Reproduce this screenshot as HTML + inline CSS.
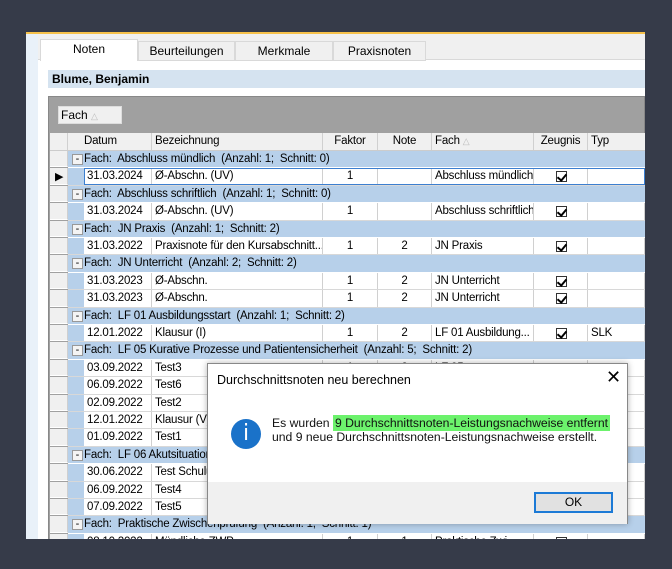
<!DOCTYPE html>
<html><head><meta charset="utf-8"><style>
*{margin:0;padding:0;box-sizing:border-box}
body{width:672px;height:569px;background:#363b49;position:relative;overflow:hidden;font-family:"Liberation Sans",Arial,sans-serif;font-size:12px;color:#000}
.a{position:absolute}
#win{left:26px;top:32px;width:619px;height:507px;background:#fff;border-top:2px solid #f6c14a;overflow:hidden}
.tab{position:absolute;top:7px;height:20px;background:#f0f0f0;border:1px solid #d9d9d9;text-align:center;line-height:18px}
.cell{position:absolute;top:0;height:100%;border-right:1px solid #d0d0d0;white-space:nowrap;overflow:hidden;padding-left:3px;line-height:17px;font-size:11.5px;letter-spacing:-0.2px}
.row{position:absolute;left:22px;width:600px;height:17.4px;font-size:11.5px}
.g{background:#b7d0ea;border-bottom:1px solid #fff}
.d{background:#fff;border-bottom:1px solid #d8d8d8}
.ind{position:absolute;left:-18px;width:18px;top:0;height:100%;background:#f0f0f0;border-right:1px solid #cfcfcf;border-bottom:1px solid #fff}
.chk{position:absolute;left:22px;top:3px;width:11px;height:11px;border:1px solid #333;background:#fff}
.chk:after{content:"";position:absolute;left:2px;top:0px;width:4px;height:7px;border:solid #000;border-width:0 2px 2px 0;transform:rotate(40deg)}
.minus{position:absolute;left:4px;top:3px;width:11px;height:11px;border:1px solid #999;background:#f4f4f4;font-size:11px;line-height:8px;text-align:center}
</style></head><body>
<div id="win" class="a">
 <div class="a" style="left:0;top:0;width:12px;height:507px;background:#e9f1f9"></div>
 <div class="a" style="left:12px;top:0;width:607px;height:26px;background:#f0f0f0;border-bottom:1px solid #d9d9d9"></div>
 <div class="tab" style="left:14px;top:5px;width:98px;height:22px;background:#fff;border-bottom:none">Noten</div>
 <div class="tab" style="left:112px;width:97px">Beurteilungen</div>
 <div class="tab" style="left:209px;width:98px">Merkmale</div>
 <div class="tab" style="left:307px;width:93px">Praxisnoten</div>
 <div class="a" style="left:22px;top:36px;width:597px;height:18px;background:#d5e3f0;font-weight:bold;padding-left:4px;line-height:18px">Blume, Benjamin</div>
 <div class="a" style="left:22px;top:62px;width:597px;height:450px;background:#a0a0a0;border:1px solid #888"></div>
 <div class="a" style="left:32px;top:72px;width:64px;height:18px;background:#f0f0f0;border:1px solid #ddd;padding-left:2px;line-height:16px">Fach <span style="color:#bbb;font-size:9px">&#9651;</span></div>
 <div class="a" style="left:24px;top:99px;width:595px;height:18px;background:#f0f0f0;border-bottom:1px solid #ccc">
  <div class="cell" style="left:0;width:18px"></div>
  <div class="cell" style="left:18px;width:84px;padding-left:16px">Datum</div>
  <div class="cell" style="left:102px;width:171px">Bezeichnung</div>
  <div class="cell" style="left:273px;width:55px;text-align:center;padding:0">Faktor</div>
  <div class="cell" style="left:328px;width:54px;text-align:center;padding:0">Note</div>
  <div class="cell" style="left:382px;width:102px">Fach <span style="color:#bbb;font-size:9px">&#9651;</span></div>
  <div class="cell" style="left:484px;width:54px;text-align:center;padding:0">Zeugnis</div>
  <div class="cell" style="left:538px;width:60px">Typ</div>
 </div>
 <div id="rows"></div>
</div>
<script>
var R=[
['g','Abschluss mündlich  (Anzahl: 1;  Schnitt: 0)'],
['d','31.03.2024','Ø-Abschn. (UV)','1','','Abschluss mündlich',''],
['g','Abschluss schriftlich  (Anzahl: 1;  Schnitt: 0)'],
['d','31.03.2024','Ø-Abschn. (UV)','1','','Abschluss schriftlich',''],
['g','JN Praxis  (Anzahl: 1;  Schnitt: 2)'],
['d','31.03.2022','Praxisnote für den Kursabschnitt...','1','2','JN Praxis',''],
['g','JN Unterricht  (Anzahl: 2;  Schnitt: 2)'],
['d','31.03.2023','Ø-Abschn.','1','2','JN Unterricht',''],
['d','31.03.2023','Ø-Abschn.','1','2','JN Unterricht',''],
['g','LF 01 Ausbildungsstart  (Anzahl: 1;  Schnitt: 2)'],
['d','12.01.2022','Klausur (I)','1','2','LF 01 Ausbildung...','SLK'],
['g','LF 05 Kurative Prozesse und Patientensicherheit  (Anzahl: 5;  Schnitt: 2)'],
['d','03.09.2022','Test3','1','2','LF 05',''],
['d','06.09.2022','Test6','1','2','LF 05',''],
['d','02.09.2022','Test2','1','2','LF 05',''],
['d','12.01.2022','Klausur (V)','1','2','LF 05',''],
['d','01.09.2022','Test1','1','2','LF 05',''],
['g','LF 06 Akutsituationen  (Anzahl: 3;  Schnitt: 2)'],
['d','30.06.2022','Test Schulung','1','2','LF 06',''],
['d','06.09.2022','Test4','1','2','LF 06',''],
['d','07.09.2022','Test5','1','2','LF 06',''],
['g','Praktische Zwischenprüfung  (Anzahl: 1;  Schnitt: 1)'],
['d','08.10.2022','Mündliche ZWP','1','1','Praktische Zwi...','']
];
var h='';
R.forEach(function(r,i){
 var t=117+i*17.4;
 if(r[0]=='g'){
  h+='<div class="row g" style="top:'+t+'px;left:42px;width:577px"><div class="ind"></div><div class="minus">-</div><div class="a" style="left:16px;top:0;line-height:17px;white-space:pre;letter-spacing:-0.2px">Fach:  '+r[1]+'</div></div>';
 }else{
  var sel=i==1;
  h+='<div class="row d" style="top:'+t+'px;left:42px;width:577px"><div class="ind">'+(sel?'<span style="position:absolute;left:5px;top:2px;font-size:11px">&#9654;</span>':'')+'</div>'+
  '<div class="cell" style="left:0;width:16px;background:#b7d0ea;border:none"></div>'+
  '<div class="cell" style="left:16px;width:68px">'+r[1]+'</div>'+
  '<div class="cell" style="left:84px;width:171px">'+r[2]+'</div>'+
  '<div class="cell" style="left:255px;width:55px;text-align:center;padding:0">'+r[3]+'</div>'+
  '<div class="cell" style="left:310px;width:54px;text-align:center;padding:0">'+r[4]+'</div>'+
  '<div class="cell" style="left:364px;width:102px">'+r[5]+'</div>'+
  '<div class="cell" style="left:466px;width:54px"><div class="chk"></div></div>'+
  '<div class="cell" style="left:520px;width:57px">'+r[6]+'</div>'+
  (sel?'<div class="a" style="left:16px;top:0;width:561px;height:100%;border:1px solid #3c7fd0"></div>':'')+'</div>';
 }
});
document.getElementById('rows').innerHTML=h;
</script>
<div class="a" style="left:207px;top:363px;width:421px;height:161px;background:#fff;border:1px solid #888;box-shadow:0 0 6px rgba(0,0,0,.3)">
 <div class="a" style="left:9px;top:9px;font-size:12.5px">Durchschnittsnoten neu berechnen</div>
 <div class="a" style="left:398px;top:3px;font-size:18px;font-weight:300">&#10005;</div>
 <div class="a" style="left:23px;top:55px;width:30px;height:30px;border-radius:50%;background:#1a72c9;color:#fff;text-align:center;font-size:22px;line-height:30px;font-family:'DejaVu Sans',sans-serif">i</div>
 <div class="a" style="left:64px;top:52px;font-size:12.2px;line-height:14px;color:#111;white-space:nowrap">Es wurden <span style="background:#6cf26c;padding:1px 2px">9 Durchschnittsnoten-Leistungsnachweise entfernt</span><br>und 9 neue Durchschnittsnoten-Leistungsnachweise erstellt.</div>
 <div class="a" style="left:0;top:118px;width:419px;height:42px;background:#f0f0f0"></div>
 <div class="a" style="left:326px;top:128px;width:79px;height:21px;background:#e1e1e1;border:2px solid #1c7ad6;text-align:center;line-height:17px">OK</div>
</div>
</body></html>
